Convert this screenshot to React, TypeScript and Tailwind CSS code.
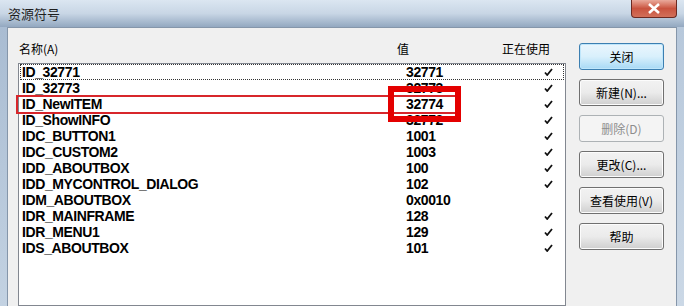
import React from "react";

type Sym = { name: string; value: string; used: boolean };

const symbols: Sym[] = [
  { name: "ID_32771", value: "32771", used: true },
  { name: "ID_32773", value: "32773", used: true },
  { name: "ID_NewITEM", value: "32774", used: true },
  { name: "ID_ShowINFO", value: "32772", used: true },
  { name: "IDC_BUTTON1", value: "1001", used: true },
  { name: "IDC_CUSTOM2", value: "1003", used: true },
  { name: "IDD_ABOUTBOX", value: "100", used: true },
  { name: "IDD_MYCONTROL_DIALOG", value: "102", used: true },
  { name: "IDM_ABOUTBOX", value: "0x0010", used: false },
  { name: "IDR_MAINFRAME", value: "128", used: true },
  { name: "IDR_MENU1", value: "129", used: true },
  { name: "IDS_ABOUTBOX", value: "101", used: true },
];

const cjk = "font-['Segoe_UI','Noto_Sans_CJK_SC',sans-serif]";

function Check() {
  return (
    <svg width="9" height="8" viewBox="0 0 9 8">
      <path d="M1 4.5 L3.2 7 L8 1" fill="none" stroke="#111" strokeWidth="1.8" />
    </svg>
  );
}

function DlgButton({ label, kind }: { label: string; kind?: "default" | "disabled" }) {
  const base =
    "h-[27px] w-[85px] rounded-[3px] border text-[12px] flex items-center justify-center " + cjk;
  if (kind === "default")
    return (
      <button className={base + " border-[#3c7fb1] bg-gradient-to-b from-[#eaf6fd] via-[#d9f0fc] to-[#a7d9f5] text-black shadow-[inset_0_0_0_1px_#bfe6fb]"}>
        {label}
      </button>
    );
  if (kind === "disabled")
    return (
      <button className={base + " border-[#adb2b5] bg-[#f4f4f4] text-[#8d8d8d]"}>{label}</button>
    );
  return (
    <button className={base + " border-[#707070] bg-gradient-to-b from-[#f2f2f2] via-[#ebebeb] to-[#cfcfcf] text-black shadow-[inset_0_0_0_1px_#fcfcfc]"}>
      {label}
    </button>
  );
}

export default function App() {
  return (
    <div className="relative w-[684px] h-[306px] overflow-hidden flex flex-col bg-[#b9cadd]">
      {/* Title bar */}
      <div className="h-[27px] flex items-start justify-between bg-gradient-to-b from-[#dbe6f1] via-[#c8d6e5] to-[#93a8c0]">
        <span className={"pl-[8px] pt-[4px] text-[13px] text-[#1e1e1e] " + cjk}>资源符号</span>
        <div className="mr-[7px] w-[46px] h-[18px] rounded-b-[4px] border border-t-0 border-[#6b2a22] bg-gradient-to-b from-[#e9a99b] via-[#c9533f] to-[#d2705a] flex items-center justify-center">
          <svg width="14" height="11" viewBox="0 0 14 11">
            <path d="M2 1 L12 10 M12 1 L2 10" stroke="#fff" strokeWidth="2.6" />
          </svg>
        </div>
      </div>

      <div className="flex-1 flex">
        <div className="w-[7px] bg-gradient-to-b from-[#a9bcd2] to-[#c3d2e2]" />
        {/* Client */}
        <div className="flex-1 flex border-l border-t border-[#8596aa] bg-[#f0f0f0]">
          <div className="pl-[10px] pt-[12px] flex flex-col">
            <div className={"h-[23px] flex text-[12px] text-black " + cjk}>
              <span className="w-[379px] pl-[1px]">名称(A)</span>
              <span className="w-[105px]">值</span>
              <span>正在使用</span>
            </div>
            <div className="w-[548px] flex-1 border border-[#828790] bg-white pt-0">
              <div className="font-['Liberation_Sans',Arial,sans-serif] font-bold text-[14px] tracking-[-0.4px] text-black">
                {symbols.map((s, i) => (
                  <div
                    key={s.name}
                    className={
                      "h-[16px] mx-[1px] flex items-center leading-[16px] " +
                      (i === 0 ? "outline outline-1 outline-dotted outline-[#333] -outline-offset-1" : "")
                    }
                  >
                    <span className="w-[386px] pl-[2px]">{s.name}</span>
                    <span className="w-[138px]">{s.value}</span>
                    <span className="w-[10px] flex items-center">{s.used && <Check />}</span>
                  </div>
                ))}
              </div>
            </div>
          </div>
          <div className="pl-[13px] pt-[15px] flex flex-col gap-[9px]">
            <DlgButton label="关闭" kind="default" />
            <DlgButton label="新建(N)..." />
            <DlgButton label="删除(D)" kind="disabled" />
            <DlgButton label="更改(C)..." />
            <DlgButton label="查看使用(V)" />
            <DlgButton label="帮助" />
          </div>
        </div>
        <div className="w-[8px] border-l border-[#8596aa] bg-gradient-to-b from-[#b7c8db] to-[#cbd8e6]" />
      </div>

      {/* annotation boxes */}
      <div className="absolute left-[16px] top-[95px] w-[444px] h-[19px] border-2 border-[#d8262b]" />
      <div className="absolute left-[388px] top-[86px] w-[73px] h-[36px] border-[6px] border-[#e40000]" />
    </div>
  );
}
